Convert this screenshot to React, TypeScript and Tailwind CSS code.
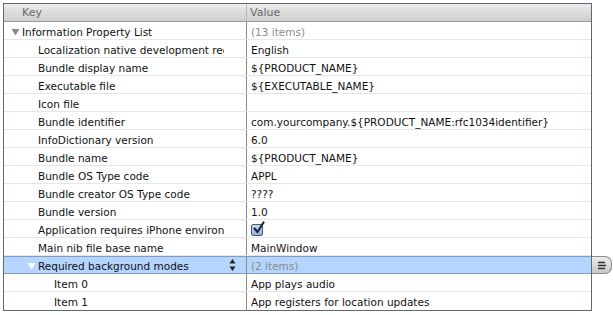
import React from "react";

interface Row {
    key: string;
    value: string;
    depth: number;
    expanded?: boolean;
    muted?: boolean;
    checkbox?: boolean;
    selected?: boolean;
}

const rows: Row[] = [
    { key: "Information Property List", value: "(13 items)", depth: 0, expanded: true, muted: true },
    { key: "Localization native development region", value: "English", depth: 1 },
    { key: "Bundle display name", value: "${PRODUCT_NAME}", depth: 1 },
    { key: "Executable file", value: "${EXECUTABLE_NAME}", depth: 1 },
    { key: "Icon file", value: "", depth: 1 },
    { key: "Bundle identifier", value: "com.yourcompany.${PRODUCT_NAME:rfc1034identifier}", depth: 1 },
    { key: "InfoDictionary version", value: "6.0", depth: 1 },
    { key: "Bundle name", value: "${PRODUCT_NAME}", depth: 1 },
    { key: "Bundle OS Type code", value: "APPL", depth: 1 },
    { key: "Bundle creator OS Type code", value: "????", depth: 1 },
    { key: "Bundle version", value: "1.0", depth: 1 },
    { key: "Application requires iPhone environment", value: "", depth: 1, checkbox: true },
    { key: "Main nib file base name", value: "MainWindow", depth: 1 },
    { key: "Required background modes", value: "(2 items)", depth: 1, expanded: true, muted: true, selected: true },
    { key: "Item 0", value: "App plays audio", depth: 2 },
    { key: "Item 1", value: "App registers for location updates", depth: 2 },
];

function Triangle({ white }: { white?: boolean }) {
    return (
        <svg width="9" height="8" viewBox="0 0 9 8" className="shrink-0">
            <path d="M0.5 1 L8.5 1 L4.5 7.5 Z" fill={white ? "#ffffff" : "#8a8a8a"} />
        </svg>
    );
}

function Stepper() {
    return (
        <svg width="7" height="14" viewBox="0 0 7 14">
            <path d="M3.5 1 L6.5 5.5 L0.5 5.5 Z" fill="#222" />
            <path d="M3.5 13 L6.5 8.5 L0.5 8.5 Z" fill="#222" />
        </svg>
    );
}

function CheckBox() {
    return (
        <div className="w-[12px] h-[12px] -mt-[2px] rounded-[2px] border border-[#4a5a72] bg-gradient-to-b from-[#c9dcf3] to-[#8fb2de] relative">
            <svg width="14" height="14" viewBox="0 0 14 14" className="absolute -top-[4px] left-[0px]">
                <path d="M2.5 7.5 L5.5 11 L11.5 1.5" fill="none" stroke="#1b2740" strokeWidth="2.2" strokeLinecap="round" strokeLinejoin="round" />
            </svg>
        </div>
    );
}

function KeyCell({ row }: { row: Row }) {
    const pad = row.depth === 0 ? "pl-[7px]" : row.depth === 1 ? "pl-[23px]" : "pl-[39px]";
    return (
        <div className={`relative w-[243px] shrink-0 h-full flex items-center pt-[4px] border-r border-[#8c8c8c] ${pad} pr-[22px] overflow-hidden`}>
            {row.expanded ? (
                <span className="w-[11px] shrink-0 flex items-center -mt-[2px]"><Triangle white={row.selected} /></span>
            ) : (
                row.depth > 0 && <span className="w-[11px] shrink-0" />
            )}
            <span className="whitespace-nowrap overflow-hidden flex-1 text-[#111]">{row.key}</span>
            {row.selected && (
                <span className="absolute right-[10px] top-[1px]">
                    <Stepper />
                </span>
            )}
        </div>
    );
}

export default function App() {
    return (
        <div className="w-[613px] h-[315px] bg-white pt-[3px] pl-[3px] text-[10.5px]" style={{ fontFamily: '"DejaVu Sans", "Lucida Grande", sans-serif' }}>
            <div className="w-[589px] border border-[#5f6877] bg-white">
                <div className="h-[18px] flex bg-gradient-to-b from-[#ececec] via-[#dcdcdc] to-[#cfcfcf] border-b border-[#9a9a9a] text-[#6a6a6a] text-[11px]">
                    <div className="w-[243px] shrink-0 h-full flex items-center pl-[18px] pt-[1px] border-r border-[#b8b8b8]">Key</div>
                    <div className="flex-1 h-full flex items-center pl-[3px] pt-[1px]">Value</div>
                </div>
                {rows.map((row, i) => (
                    <div
                        key={i}
                        className={`relative h-[18px] flex ${row.selected ? "bg-[#b5d5ff] border-y border-[#7f9bbf]" : i === rows.length - 1 ? "" : "border-b border-[#e6e6e6]"}`}
                    >
                        <KeyCell row={row} />
                        <div className={`flex-1 h-full flex items-center pt-[4px] pl-[4px] whitespace-nowrap ${row.muted ? "text-[#8a8a8a]" : "text-[#111]"}`}>
                            {row.checkbox ? <CheckBox /> : row.value}
                        </div>
                        {row.selected && (
                            <div className="absolute -right-[21px] -top-px h-[18px] w-[20px] rounded-r-[7px] border border-l-0 border-[#8a8a8a] bg-gradient-to-b from-[#ececec] to-[#c8c8c8] flex items-center justify-center">
                                <svg width="10" height="9" viewBox="0 0 10 9">
                                    <path d="M1 1.5 H8 M1 4.5 H9 M1 7.5 H8" stroke="#333" strokeWidth="1.3" />
                                </svg>
                            </div>
                        )}
                    </div>
                ))}
            </div>
        </div>
    );
}
